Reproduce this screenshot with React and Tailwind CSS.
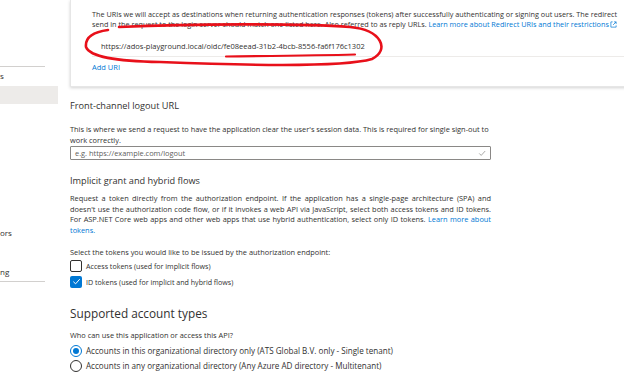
import React from "react";

const font = { fontFamily: '"Open Sans", "Noto Sans", sans-serif' };

const Line = ({ children, justify = true }) => (
  <div className={justify ? "text-justify [text-align-last:justify] whitespace-nowrap" : "whitespace-nowrap"}>
    {children}
  </div>
);

const Checkbox = ({ checked, label }) => (
  <div className="flex items-center gap-[4px] h-[16px]">
    {checked ? (
      <div className="w-[12px] h-[12px] rounded-[2px] bg-[#0078d4] flex items-center justify-center">
        <svg width="9" height="9" viewBox="0 0 10 10">
          <path d="M1.5 5.2 L4 7.6 L8.6 2.4" fill="none" stroke="#fff" strokeWidth="1.1" />
        </svg>
      </div>
    ) : (
      <div className="w-[12px] h-[12px] rounded-[2px] border border-[#323130] bg-white" />
    )}
    <span className="text-[7.1px]">{label}</span>
  </div>
);

const Radio = ({ checked, label }) => (
  <div className="flex items-center gap-[4px] h-[15px]">
    <div
      className={`w-[12px] h-[12px] rounded-full border flex items-center justify-center ${
        checked ? "border-[#0078d4]" : "border-[#323130]"
      }`}
    >
      {checked && <div className="w-[6px] h-[6px] rounded-full bg-[#0078d4]" />}
    </div>
    <span className="text-[8.1px]">{label}</span>
  </div>
);

export default function App() {
  return (
    <div
      className="relative w-[624px] h-[385px] overflow-hidden bg-white flex text-[#323130] text-[7.4px] leading-[10.5px]"
      style={font}
    >
      {/* left nav, scrolled off */}
      <div className="w-[58px] shrink-0 flex flex-col">
        <div className="h-[66px]" />
        <div className="w-[45px] border-t border-[#d2d0ce]" />
        <div className="h-[19px] flex items-center text-[8px]">s</div>
        <div className="h-[18px] bg-[#edebe9]" />
        <div className="h-[121px]" />
        <div className="h-[16px] flex items-center text-[8px]">ors</div>
        <div className="h-[23px]" />
        <div className="h-[17px] flex items-center text-[8px]">ng</div>
        <div className="w-[45px] border-t border-[#d2d0ce]" />
      </div>

      <div className="flex-1 pl-[12px] flex flex-col">
        {/* redirect URI card */}
        <div className="w-[600px] h-[87px] shrink-0 bg-white shadow-[0_1px_3px_rgba(0,0,0,0.18)] border-l border-b border-[#e6e6e6] pl-[21px] pt-[9px] leading-[10px] text-[7.25px] overflow-hidden">
          <div className="whitespace-nowrap">
            The URIs we will accept as destinations when returning authentication responses (tokens) after successfully
            authenticating or signing out users. The redirect
          </div>
          <div className="whitespace-nowrap">
            send in the request to the login server should match one listed here. Also referred to as reply URLs.{" "}
            <span className="text-[#0078d4]">Learn more about Redirect URIs and their restrictions</span>
            <svg className="inline-block ml-[1px] align-[-1px]" width="7" height="7" viewBox="0 0 8 8">
              <path d="M3 1H1v6h6V5M4.5 1H7v2.5M7 1L3.5 4.5" fill="none" stroke="#0078d4" strokeWidth="0.8" />
            </svg>
          </div>
          <div className="mt-[6px] h-[22px] border-b border-[#edebe9] flex items-center pl-[9px] text-[7.5px]">
            https://ados-playground.local/oidc/fe08eead-31b2-4bcb-8556-fa6f176c1302
          </div>
          <div className="mt-[5px] text-[#0078d4] text-[7.5px]">Add URI</div>
        </div>

        {/* front-channel logout */}
        <div className="mt-[12px] text-[9.2px] leading-[14px]">Front-channel logout URL</div>
        <div className="mt-[11px] w-[421px]">
          <Line justify={false}>
            This is where we send a request to have the application clear the user's session data. This is required for
            single sign-out to
          </Line>
          <Line justify={false}>work correctly.</Line>
        </div>
        <div className="mt-[1px] w-[421px] h-[14px] border border-[#8a8886] rounded-[1px] flex items-center justify-between pl-[4px] pr-[4px]">
          <span className="text-[#605e5c]">e.g. https://example.com/logout</span>
          <svg width="8" height="8" viewBox="0 0 10 10">
            <path d="M1.5 5.5 L4 8 L9 2.5" fill="none" stroke="#8a8886" strokeWidth="0.9" />
          </svg>
        </div>

        {/* implicit grant */}
        <div className="mt-[14px] text-[9.2px] leading-[14px]">Implicit grant and hybrid flows</div>
        <div className="mt-[5px] w-[421px] leading-[10.6px]">
          <Line>
            Request a token directly from the authorization endpoint. If the application has a single-page architecture
            (SPA) and
          </Line>
          <Line>
            doesn't use the authorization code flow, or if it invokes a web API via JavaScript, select both access
            tokens and ID tokens.
          </Line>
          <Line>
            For ASP.NET Core web apps and other web apps that use hybrid authentication, select only ID tokens.{" "}
            <span className="text-[#0078d4]">Learn more about</span>
          </Line>
          <Line justify={false}>
            <span className="text-[#0078d4]">tokens.</span>
          </Line>
        </div>
        <div className="mt-[12px]">Select the tokens you would like to be issued by the authorization endpoint:</div>
        <div className="flex flex-col">
          <Checkbox label="Access tokens (used for implicit flows)" />
          <Checkbox checked label="ID tokens (used for implicit and hybrid flows)" />
        </div>

        {/* account types */}
        <div className="mt-[15px] text-[11.8px] leading-[16px]">Supported account types</div>
        <div className="mt-[9px]">Who can use this application or access this API?</div>
        <div className="mt-[3px] flex flex-col">
          <Radio checked label="Accounts in this organizational directory only (ATS Global B.V. only - Single tenant)" />
          <Radio label="Accounts in any organizational directory (Any Azure AD directory - Multitenant)" />
        </div>
      </div>

      {/* red marker annotation drawn over the screenshot */}
      <svg className="absolute left-0 top-0 pointer-events-none" width="624" height="385">
        <path
          d="M119 27 C 190 24, 300 23, 350 27 C 382 30, 390 50, 372 59 C 345 67, 260 66, 160 62 C 115 61, 90 57, 86 47 C 85 38, 93 32, 108 30"
          fill="none"
          stroke="#e8101a"
          strokeWidth="2.6"
          strokeLinecap="round"
        />
        <path d="M226 56.5 C 270 56, 320 55.5, 355 54.5" fill="none" stroke="#e8101a" strokeWidth="2.2" strokeLinecap="round" />
      </svg>
    </div>
  );
}
